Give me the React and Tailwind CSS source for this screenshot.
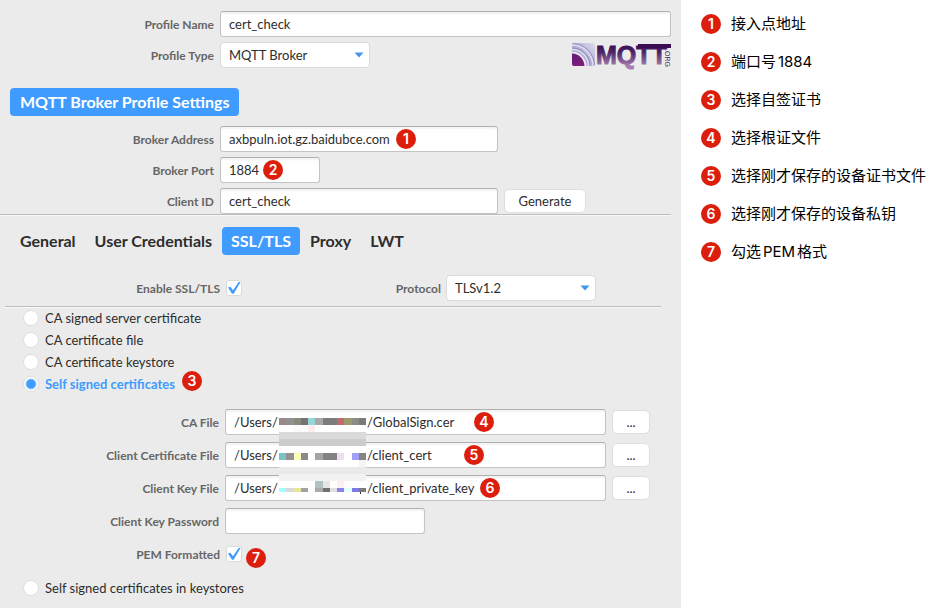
import React, { useState } from 'react';

const notes = [
  '接入点地址',
  '端口号1884',
  '选择自签证书',
  '选择根证文件',
  '选择刚才保存的设备证书文件',
  '选择刚才保存的设备私钥',
  '勾选PEM格式',
];

const tabs = ['General', 'User Credentials', 'SSL/TLS', 'Proxy', 'LWT'];

const certModes = [
  'CA signed server certificate',
  'CA certificate file',
  'CA certificate keystore',
  'Self signed certificates',
];

const certFiles = [
  { id: 'ca-file', label: 'CA File', tail: '/GlobalSign.cer', step: 4, badge: 'left-[248px]' },
  { id: 'client-cert', label: 'Client Certificate File', tail: '/client_cert', step: 5, badge: 'left-[238px]' },
  { id: 'client-key', label: 'Client Key File', tail: '/client_private_key', step: 6, badge: 'left-[254px]' },
];

const fieldStyle =
  'h-[26px] rounded-[3px] border border-[#c4c4c4] border-t-[#b0b0b0] bg-white shadow-[inset_0_2px_2px_#f3f3f3] text-[13px] text-[#2d2d2d] focus:outline-none';
const buttonStyle =
  'h-6 shrink-0 rounded-[5px] border border-[#dedede] bg-white pt-[2px] text-[13px] text-[#2d2d2d]';

const Badge = ({ children, className = '' }) => (
  <span
    className={`flex size-5 shrink-0 items-center justify-center rounded-full bg-[#dc1e0c] font-['Inter',sans-serif] text-sm leading-5 font-semibold text-white ${className}`}
  >
    {children}
  </span>
);

const Label = ({ htmlFor, className = 'w-[214px]', children }) => (
  <label htmlFor={htmlFor} className={`shrink-0 pt-[2px] text-right text-xs font-bold text-[#666666] ${className}`}>
    {children}
  </label>
);

const Select = ({ id, options }) => (
  <div className="relative w-[150px]">
    <select
      id={id}
      className="block h-[26px] w-full appearance-none rounded-[4px] border border-[#dadada] bg-white px-2 pt-[2px] text-[13px] text-[#2d2d2d] focus:outline-none"
    >
      {options.map((option) => (
        <option key={option}>{option}</option>
      ))}
    </select>
    <svg viewBox="0 0 10 6" className="pointer-events-none absolute top-[10px] right-[6px] h-[6px] w-[10px]">
      <path d="M0.5 0.5H9.5L5 5.5Z" fill="#4596ea" />
    </svg>
  </div>
);

const Checkbox = ({ id }) => (
  <span className="relative block size-4">
    <input
      id={id}
      type="checkbox"
      defaultChecked
      className="peer block size-4 appearance-none rounded-[3px] border border-[#dadada] bg-white"
    />
    <svg viewBox="0 0 16 16" className="pointer-events-none absolute inset-0 hidden size-4 peer-checked:block">
      <path d="M2 7.6L4.4 6.8L7 10.2L12.8 1.8L14.4 2.2L7.6 13.8H6Z" fill="#3f9bfd" />
    </svg>
  </span>
);

const RadioOption = ({ label, selected, onSelect, children }) => (
  <div className="flex h-[22px] items-center">
    <label
      className={`flex items-center gap-[6px] text-[13px] ${selected ? 'font-bold text-[#3f9bfd]' : 'text-[#2d2d2d]'}`}
    >
      <input
        type="radio"
        name="cert-mode"
        checked={selected}
        onChange={onSelect}
        className="size-4 appearance-none rounded-full border border-[#dedede] bg-white checked:bg-[radial-gradient(circle,#3f9bfd_4px,#ffffff_6px)]"
      />
      <span className="pt-[2px]">{label}</span>
    </label>
    {children}
  </div>
);

const MqttLogo = () => (
  <svg viewBox="0 0 100 26" className="h-[26px] w-[100px] shrink-0 overflow-visible" role="img" aria-label="MQTT.org">
    <defs>
      <linearGradient id="word" gradientUnits="userSpaceOnUse" x1="0" y1="1" x2="0" y2="24">
        <stop offset="0" stopColor="#35074f" />
        <stop offset="0.4" stopColor="#4d2368" />
        <stop offset="1" stopColor="#a67fb0" />
      </linearGradient>
      <linearGradient id="waves" x1="0" y1="1" x2="1" y2="0">
        <stop offset="0" stopColor="#d9d5ea" />
        <stop offset="0.5" stopColor="#b4b0d8" />
        <stop offset="1" stopColor="#dcdcec" />
      </linearGradient>
      <linearGradient id="core" x1="0.5" y1="0" x2="1" y2="1">
        <stop offset="0" stopColor="#5c1f70" />
        <stop offset="1" stopColor="#a01c88" />
      </linearGradient>
      <clipPath id="tile">
        <rect x="1" y="1" width="23" height="23" rx="2" />
      </clipPath>
    </defs>
    <g clipPath="url(#tile)">
      <rect x="1" y="1" width="23" height="23" fill="url(#waves)" />
      <circle cx="1" cy="24" r="22.5" fill="none" stroke="#8d8bc0" strokeWidth="1" />
      <circle cx="1" cy="24" r="21" fill="none" stroke="#dedeee" strokeWidth="1.4" />
      <circle cx="1" cy="24" r="18" fill="none" stroke="#8482ba" strokeWidth="1" />
      <circle cx="1" cy="24" r="16.6" fill="none" stroke="#dedeee" strokeWidth="1.4" />
      <circle cx="1" cy="24" r="14" fill="#efedf6" />
      <circle cx="1" cy="24" r="12.4" fill="url(#core)" />
    </g>
    <text
      x="25"
      y="22"
      fill="url(#word)"
      stroke="url(#word)"
      strokeWidth="1"
      className="font-['Liberation_Sans',sans-serif] text-[25px] font-bold"
    >
      MQTT
    </text>
    <rect x="67" y="2" width="33" height="4" fill="#3a0d54" />
    <text
      transform="translate(94 7) rotate(90)"
      fill="#4d2368"
      className="font-['Liberation_Sans',sans-serif] text-[7px]"
    >
      .ORG
    </text>
  </svg>
);

// Rows of the pixelated block that hides the user folder: [y, height, colours]
const mosaic = [
  [0, 7, ['#9a8888', '#929090', '#878a7c', '#747474', '#96d6d8', '#a8a8a8', '#7c7c7c', '#7c7c7c', '#c46a6c', '#9a9a6e', '#8c8c84', '#7a7a7a']],
  [7, 7, ['#ffffff', '#ffffff', '#fafafa', '#fbfbff', '#fdecec', '#ffffff', '#ffffff', '#ffffff', '#ffffff', '#ffffff', '#ffffff', '#ffffff']],
  [14, 7, Array(12).fill('#dadada')],
  [21, 7, Array(12).fill('#cccccc')],
  [28, 7, Array(12).fill('#ffffff')],
  [35, 7, ['#78c4c6', '#929292', '#fdfdb8', '#8a8a8a', '#ffffff', '#a4a4a4', '#828282', '#828282', '#eedff0', '#ffffff', '#a0a0fc', '#848484']],
  [42, 7, ['#ffffff', '#ffffff', '#ffffff', '#ffffff', '#ffffff', '#ffffff', '#ffffff', '#ffffff', '#ffffff', '#ffffff', '#ffffff', '#f4f4f4']],
  [49, 7, Array(12).fill('#eaeaea')],
  [56, 7, Array(12).fill('#f2f2f2')],
  [63, 7, ['#ffffff', '#ffffff', '#ffffff', '#ffffff', '#ffffff', '#b0c2c2', '#e6e6e6', '#ffffff', '#fff0f0', '#ffffff', '#ffffff', '#ffffff']],
  [70, 4, ['#a0ffff', '#d8d8d8', '#e6e694', '#a2a2a2', '#ffffff', '#aaaaaa', '#707070', '#e0e0e0', '#8c80ea', '#e0ffff', '#7c7ce0', '#7a7a7a']],
];

const Mosaic = () => (
  <svg
    viewBox="0 0 84 76"
    preserveAspectRatio="none"
    shapeRendering="crispEdges"
    aria-hidden="true"
    className="pointer-events-none absolute top-[9px] left-[279px] h-[76px] w-[87px]"
  >
    {mosaic.map(([y, height, colors]) =>
      colors.map((color, i) => <rect key={`${y}-${i}`} x={i * 7} y={y} width="7" height={height} fill={color} />)
    )}
    <rect x="78" y="74" width="1" height="2" fill="#2d2d2d" />
  </svg>
);

const Divider = ({ className = '' }) => (
  <hr className={`h-px border-0 bg-[#bdbdbd] shadow-[0_1px_0_#f8f8f8] ${className}`} />
);

const App = () => {
  const [activeTab, setActiveTab] = useState('SSL/TLS');
  const [certMode, setCertMode] = useState('Self signed certificates');

  return (
    <div className="flex min-h-screen bg-white font-['Lato',sans-serif]">
      <main className="min-w-0 flex-1 bg-[#ebebeb] pt-[11px]">
        <section className="flex flex-col gap-[5px] pr-[10px]">
          <div className="flex items-center gap-[6px]">
            <Label htmlFor="profile-name">Profile Name</Label>
            <input id="profile-name" defaultValue="cert_check" className={`min-w-0 flex-1 px-2 ${fieldStyle}`} />
          </div>
          <div className="flex items-center gap-[6px]">
            <Label htmlFor="profile-type">Profile Type</Label>
            <div className="flex flex-1 items-center justify-between">
              <Select id="profile-type" options={['MQTT Broker']} />
              <MqttLogo />
            </div>
          </div>
        </section>

        <h1 className="mt-5 ml-[10px] w-fit rounded-[4px] bg-[#3f9bfd] px-[10px] text-base leading-7 font-bold text-white">
          MQTT Broker Profile Settings
        </h1>

        <section className="mt-[10px] flex flex-col gap-[5px]">
          <div className="flex items-center gap-[6px]">
            <Label htmlFor="broker-address">Broker Address</Label>
            <div className="relative">
              <input
                id="broker-address"
                defaultValue="axbpuln.iot.gz.baidubce.com"
                className={`block w-[278px] px-2 ${fieldStyle}`}
              />
              <Badge className="absolute top-[3px] left-[176px]">1</Badge>
            </div>
          </div>
          <div className="flex items-center gap-[6px]">
            <Label htmlFor="broker-port">Broker Port</Label>
            <div className="relative">
              <input id="broker-port" defaultValue="1884" className={`block w-[100px] px-2 ${fieldStyle}`} />
              <Badge className="absolute top-[3px] left-[43px]">2</Badge>
            </div>
          </div>
          <div className="flex items-center gap-[6px]">
            <Label htmlFor="client-id">Client ID</Label>
            <input id="client-id" defaultValue="cert_check" className={`w-[278px] px-2 ${fieldStyle}`} />
            <button type="button" className={`w-[82px] ${buttonStyle}`}>
              Generate
            </button>
          </div>
        </section>

        <Divider className="mr-[10px]" />

        <nav className="mt-3 ml-[11px] flex gap-px">
          {tabs.map((tab) => (
            <button
              key={tab}
              type="button"
              onClick={() => setActiveTab(tab)}
              className={`rounded-[4px] px-[9px] text-base leading-7 font-bold ${
                tab === activeTab ? 'bg-[#3f9bfd] text-white' : 'text-[#2d2d2d]'
              }`}
            >
              {tab}
            </button>
          ))}
        </nav>

        <div className="mt-5 flex items-center">
          <Label htmlFor="enable-ssl" className="mr-[6px] w-[220px]">
            Enable SSL/TLS
          </Label>
          <Checkbox id="enable-ssl" />
          <Label htmlFor="protocol" className="mr-[5px] w-[199px]">
            Protocol
          </Label>
          <Select id="protocol" options={['TLSv1.2']} />
        </div>

        <Divider className="mt-[5px] mr-5 ml-[5px]" />

        <div className="ml-[23px]">
          {certModes.map((mode) => (
            <RadioOption key={mode} label={mode} selected={mode === certMode} onSelect={() => setCertMode(mode)}>
              {mode === 'Self signed certificates' && <Badge className="mb-[6px] ml-[7px]">3</Badge>}
            </RadioOption>
          ))}
        </div>

        <section className="relative mt-[14px] flex flex-col gap-[7px]">
          {certFiles.map(({ id, label, tail, step, badge }) => (
            <div key={id} className="flex items-center gap-[6px] pr-[31px]">
              <Label htmlFor={id} className="w-[219px]">
                {label}
              </Label>
              <div className={`relative flex flex-1 items-center pt-px pl-2 ${fieldStyle}`}>
                <span className="w-[133px] shrink-0">/Users/</span>
                <input id={id} defaultValue={tail} className="min-w-0 flex-1 focus:outline-none" />
                <Badge className={`absolute top-[2px] ${badge}`}>{step}</Badge>
              </div>
              <button type="button" aria-label={`Browse ${label}`} className={`w-[38px] ${buttonStyle}`}>
                ...
              </button>
            </div>
          ))}
          <Mosaic />
          <div className="flex items-center gap-[6px]">
            <Label htmlFor="key-password" className="w-[219px]">
              Client Key Password
            </Label>
            <input id="key-password" type="password" className={`w-[200px] px-2 ${fieldStyle}`} />
          </div>
          <div className="flex h-[26px] items-center gap-[6px]">
            <Label htmlFor="pem" className="w-[220px]">
              PEM Formatted
            </Label>
            <Checkbox id="pem" />
            <Badge className="-ml-[2px] mt-[7px]">7</Badge>
          </div>
        </section>

        <div className="mt-[10px] ml-[23px]">
          <RadioOption
            label="Self signed certificates in keystores"
            selected={certMode === 'keystores'}
            onSelect={() => setCertMode('keystores')}
          />
        </div>
      </main>

      <aside className="w-[261px] shrink-0 pt-[14px] pl-5">
        <ol className="flex flex-col gap-[18px]">
          {notes.map((note, index) => (
            <li
              key={note}
              className="flex items-center gap-[10px] font-['Inter','Noto_Sans_CJK_SC',sans-serif] text-[15px] leading-5 whitespace-nowrap text-black [text-autospace:normal]"
            >
              <Badge>{index + 1}</Badge>
              <span lang="zh-CN">{note}</span>
            </li>
          ))}
        </ol>
      </aside>
    </div>
  );
};

export default App;
